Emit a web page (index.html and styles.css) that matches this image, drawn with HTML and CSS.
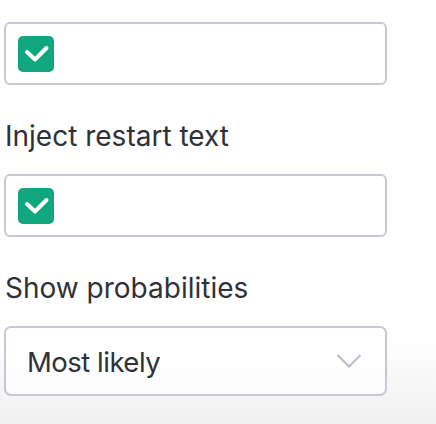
FILE: index.html
```html
<!DOCTYPE html>
<html>
<head>
<meta charset="utf-8">
<link rel="stylesheet" href="styles.css">
</head>
<body>
<div class="panel">
  <div class="field box">
    <span class="checkbox">
      <svg width="36" height="36" viewBox="0 0 36 36"><path d="M9 16 L17 23.5 L28.5 12" fill="none" stroke="#fff" stroke-width="4" stroke-linecap="round" stroke-linejoin="round"/></svg>
    </span>
  </div>
  <div class="label">Inject restart text</div>
  <div class="field box">
    <span class="checkbox">
      <svg width="36" height="36" viewBox="0 0 36 36"><path d="M9 16 L17 23.5 L28.5 12" fill="none" stroke="#fff" stroke-width="4" stroke-linecap="round" stroke-linejoin="round"/></svg>
    </span>
  </div>
  <div class="label">Show probabilities</div>
  <div class="select">
    <span class="select-text">Most likely</span>
    <svg class="chevron" width="26" height="16" viewBox="0 0 26 16"><path d="M1.5 2 L13 13.5 L24.5 2" fill="none" stroke="#bcb9cb" stroke-width="2"/></svg>
  </div>
</div>
</body>
</html>
```
FILE: styles.css
```css
html, body {
  margin: 0;
  padding: 0;
}
body {
  width: 436px;
  height: 424px;
  overflow: hidden;
  font-family: Inter, "Noto Sans", sans-serif;
  color: #2e313a;
  background: linear-gradient(to bottom, #ffffff 0px, #ffffff 340px, #efefef 424px);
}
.panel {
  padding: 22px 0 0 4px;
  width: 383px;
  display: flex;
  flex-direction: column;
}
.box {
  box-sizing: border-box;
  height: 63px;
  border: 2px solid #c9c6d5;
  border-radius: 6px;
  background: #fff;
  padding: 12px 12px;
  display: flex;
  align-items: flex-start;
}
.checkbox {
  width: 36px;
  height: 36px;
  border-radius: 5px;
  background: #10a680;
  display: block;
}
.checkbox svg {
  display: block;
}
.label {
  font-size: 28px;
  line-height: 34px;
  margin: 34px 0 21px 1px;
}
.select {
  box-sizing: border-box;
  height: 70px;
  border: 2px solid #c9c6d5;
  border-radius: 7px;
  background: linear-gradient(to bottom, rgba(255,255,255,1) 40%, rgba(255,255,255,0.6) 100%);
  display: flex;
  align-items: center;
  justify-content: space-between;
  padding: 0 23px 0 21px;
}
.select-text {
  font-size: 27.5px;
  line-height: 34px;
  letter-spacing: -0.5px;
  position: relative;
  top: 1px;
}
.chevron {
  display: block;
}
```
